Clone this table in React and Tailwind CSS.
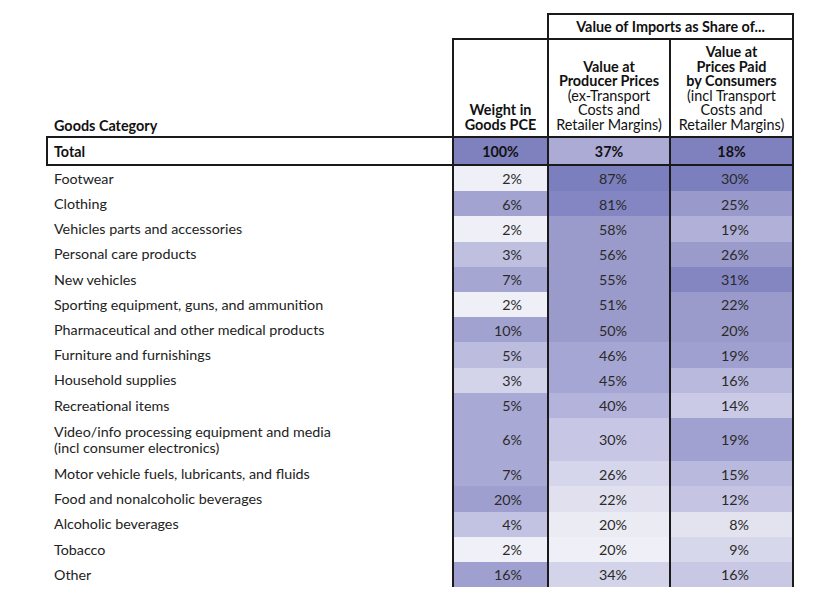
import React from "react";

const rows = [
  { name: "Footwear", w: "2%", wc: "bg-[#efeff7]", p: "87%", pc: "bg-[#7c7fbd]", c: "30%", cc: "bg-[#7c7fbd]" },
  { name: "Clothing", w: "6%", wc: "bg-[#a3a3d2]", p: "81%", pc: "bg-[#8386c2]", c: "25%", cc: "bg-[#9999cb]" },
  { name: "Vehicles parts and accessories", w: "2%", wc: "bg-[#efeff7]", p: "58%", pc: "bg-[#9a9acb]", c: "19%", cc: "bg-[#b0b0d8]" },
  { name: "Personal care products", w: "3%", wc: "bg-[#bfc0e0]", p: "56%", pc: "bg-[#9a9acb]", c: "26%", cc: "bg-[#9a9acb]" },
  { name: "New vehicles", w: "7%", wc: "bg-[#a6a6d3]", p: "55%", pc: "bg-[#9a9acb]", c: "31%", cc: "bg-[#8486c2]" },
  { name: "Sporting equipment, guns, and ammunition", w: "2%", wc: "bg-[#efeff7]", p: "51%", pc: "bg-[#9a9acb]", c: "22%", cc: "bg-[#9a9acb]" },
  { name: "Pharmaceutical and other medical products", w: "10%", wc: "bg-[#a2a2d1]", p: "50%", pc: "bg-[#9a9acb]", c: "20%", cc: "bg-[#9a9acb]" },
  { name: "Furniture and furnishings", w: "5%", wc: "bg-[#bcbcdf]", p: "46%", pc: "bg-[#a6a6d4]", c: "19%", cc: "bg-[#a0a0d0]" },
  { name: "Household supplies", w: "3%", wc: "bg-[#d3d3e9]", p: "45%", pc: "bg-[#a6a6d4]", c: "16%", cc: "bg-[#b9b9dd]" },
  { name: "Recreational items", w: "5%", wc: "bg-[#a9a9d5]", p: "40%", pc: "bg-[#b3b3db]", c: "14%", cc: "bg-[#cacae6]" },
  { name: ["Video/info processing equipment and media", "(incl consumer electronics)"], w: "6%", wc: "bg-[#a9a9d5]", p: "30%", pc: "bg-[#c7c7e5]", c: "19%", cc: "bg-[#a1a1d1]" },
  { name: "Motor vehicle fuels, lubricants, and fluids", w: "7%", wc: "bg-[#a9a9d5]", p: "26%", pc: "bg-[#d5d5eb]", c: "15%", cc: "bg-[#b9b9dd]" },
  { name: "Food and nonalcoholic beverages", w: "20%", wc: "bg-[#9f9fcf]", p: "22%", pc: "bg-[#e0e0ef]", c: "12%", cc: "bg-[#c5c5e3]" },
  { name: "Alcoholic beverages", w: "4%", wc: "bg-[#c2c2e2]", p: "20%", pc: "bg-[#ebebf4]", c: "8%", cc: "bg-[#e3e3f0]" },
  { name: "Tobacco", w: "2%", wc: "bg-[#f0f0f8]", p: "20%", pc: "bg-[#efeff7]", c: "9%", cc: "bg-[#d7d7eb]" },
  { name: "Other", w: "16%", wc: "bg-[#a0a0d0]", p: "34%", pc: "bg-[#d3d3ea]", c: "16%", cc: "bg-[#c8c8e4]" },
];

function DataRow({ r }) {
  const tall = Array.isArray(r.name);
  const h = tall ? "h-[43.3px]" : "h-[25.2px]";
  return (
    <div className={`flex ${h} text-[14.3px]`}>
      <div className="w-[406px] border-l-2 border-transparent pl-[6px] pt-[1px] flex flex-col justify-center text-[#222] leading-[16.5px]">
        {tall ? (
          <>
            <span>{r.name[0]}</span>
            <span>{r.name[1]}</span>
          </>
        ) : (
          <span>{r.name}</span>
        )}
      </div>
      <div className={`w-[95px] border-l-2 border-[#1a1a1a] ${r.wc} flex items-center justify-end pt-[1px] pr-[25px] text-[#2a2a2a]`}>
        {r.w}
      </div>
      <div className={`w-[122px] border-l-2 border-[#1a1a1a] ${r.pc} flex items-center justify-end pt-[1px] pr-[42px] text-[#2a2a2a]`}>
        {r.p}
      </div>
      <div className={`w-[125px] border-x-2 border-[#1a1a1a] ${r.cc} flex items-center justify-end pt-[1px] pr-[43px] text-[#2a2a2a]`}>
        {r.c}
      </div>
    </div>
  );
}

export default function App() {
  return (
    <div className="w-[840px] h-[602px] bg-white font-['Lato',sans-serif] pl-[46px] pt-[13px] text-[#111]">
      {/* header row 1 */}
      <div className="flex h-[25px]">
        <div className="w-[501px]" />
        <div className="w-[247px] border-t-2 border-x-2 border-[#1a1a1a] flex items-center justify-center text-[14.4px] font-bold">
          Value of Imports as Share of...
        </div>
      </div>
      {/* header row 2 */}
      <div className="flex h-[98px] text-[14.4px] leading-[14.5px] text-center">
        <div className="w-[406px] border-l-2 border-transparent pl-[6px] flex items-end pb-[3px] font-bold text-left">
          Goods Category
        </div>
        <div className="w-[95px] border-t-2 border-l-2 border-[#1a1a1a] flex flex-col justify-end pb-[4px] font-bold">
          <span>Weight in</span>
          <span>Goods PCE</span>
        </div>
        <div className="w-[122px] border-t-2 border-l-2 border-[#1a1a1a] flex flex-col justify-end pb-[4px]">
          <span className="font-bold">Value at</span>
          <span className="font-bold">Producer Prices</span>
          <span>(ex-Transport</span>
          <span>Costs and</span>
          <span>Retailer Margins)</span>
        </div>
        <div className="w-[125px] border-t-2 border-x-2 border-[#1a1a1a] flex flex-col justify-end pb-[4px]">
          <span className="font-bold">Value at</span>
          <span className="font-bold">Prices Paid</span>
          <span className="font-bold">by Consumers</span>
          <span>(incl Transport</span>
          <span>Costs and</span>
          <span>Retailer Margins)</span>
        </div>
      </div>
      {/* total row */}
      <div className="flex h-[30px] text-[14.3px] font-bold">
        <div className="w-[406px] border-y-2 border-l-2 border-[#1a1a1a] pl-[6px] pt-[1px] flex items-center">
          Total
        </div>
        <div className="w-[95px] border-y-2 border-l-2 border-[#1a1a1a] bg-[#7f80be] pt-[1px] flex items-center justify-center">
          100%
        </div>
        <div className="w-[122px] border-y-2 border-l-2 border-[#1a1a1a] bg-[#ababd6] pt-[1px] flex items-center justify-center">
          37%
        </div>
        <div className="w-[125px] border-2 border-[#1a1a1a] bg-[#7f80be] pt-[1px] flex items-center justify-center">
          18%
        </div>
      </div>
      {rows.map((r, i) => (
        <DataRow key={i} r={r} />
      ))}
    </div>
  );
}
